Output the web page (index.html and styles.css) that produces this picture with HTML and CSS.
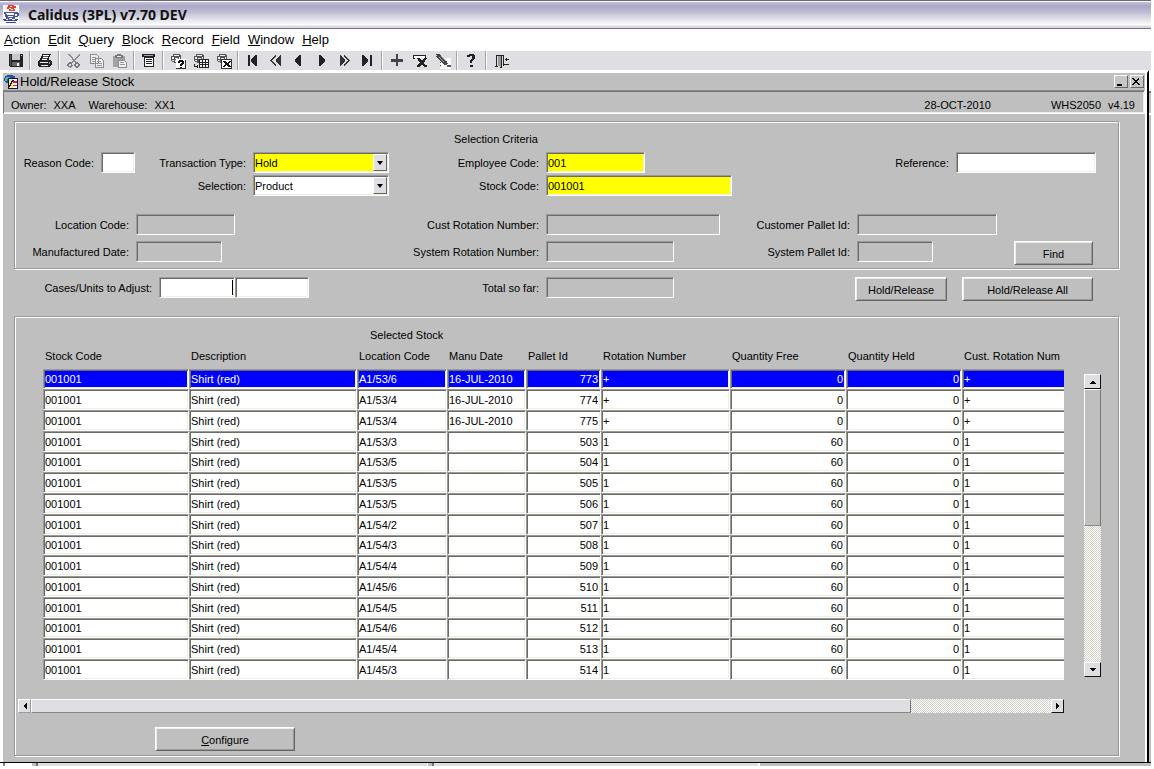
FILE: index.html
```html
<!DOCTYPE html>
<html lang="en">
<head>
<meta charset="utf-8">
<meta name="viewport" content="width=device-width, initial-scale=1">
<title>Calidus (3PL) v7.70 DEV</title>
<link rel="stylesheet" href="styles.css">
</head>
<body>
<div class="app">
  <header class="titlebar">
    <svg class="java" viewBox="0 0 16 18" aria-hidden="true"><rect width="16" height="18" fill="#fff"/><path d="M5 0h6v1h2v2h-2v1H8v1h2v1H6V4H4V2h1zM10 4h2v2h-2z" fill="#f03c30"/><path d="M7 1h2v1H7zM6 3h2v1H6z" fill="#fff"/><path d="M1 7h11v1H3v1h8V7h4v1h1v3h-1v1h-3v2H9v1H5v-1H3v-2H2V9H1z" fill="#4a54b0"/><path d="M4 9h7v1H4zM5 11h5v1H5zM12 9h2v2h-2zM6 13h3v1H6z" fill="#fff"/><path d="M0 14h3v1h9v-1h3v1h-1v1H1v-1H0zM3 17h10v1H3z" fill="#3d3f9a"/></svg>
    <h1 class="app-name">Calidus (3PL) v7.70 DEV</h1>
  </header>
  <nav class="menubar" aria-label="Main menu">
    <a href="#action"><u>A</u>ction</a>
    <a href="#edit"><u>E</u>dit</a>
    <a href="#query"><u>Q</u>uery</a>
    <a href="#block"><u>B</u>lock</a>
    <a href="#record"><u>R</u>ecord</a>
    <a href="#field"><u>F</u>ield</a>
    <a href="#window"><u>W</u>indow</a>
    <a href="#help"><u>H</u>elp</a>
  </nav>
  <div class="toolbar" role="toolbar" aria-label="Tools">
    <button class="tool" aria-label="Save"><svg viewBox="0 0 16 16"><path d="M1 1h14v13H2v-1H1z" fill="#222"/><path d="M4 1h8v6H4z" fill="#c8c8cc"/><path d="M13 2h1v1h-1z" fill="#ddd"/><path d="M4 9h8v4H4z" fill="#666"/><path d="M9 10h2v3H9z" fill="#eee"/><path d="M2 2h1v11H2z" fill="#555"/></svg></button>
    <span class="sep"></span>
    <button class="tool" aria-label="Print"><svg viewBox="0 0 16 16"><path d="M5 1h9v1h-1v2h-1v3h2v1h1v4h-1v1h-1v1H2v-1H1V8h1V7h1V5h1V3h1z" fill="#222"/><path d="M6 2h6v1h-1v2h-1v2H5V5h1z" fill="#fff"/><path d="M6 3h5v1H6zM5 5h5v1H5z" fill="#555"/><path d="M3 9h8v1H3zM4 12h7v1H4z" fill="#eee"/><path d="M12 9h1v2h-1z" fill="#aaa"/></svg></button>
    <span class="sep"></span>
    <button class="tool" aria-label="Cut" disabled><svg viewBox="0 0 16 16"><path d="M3 1l7 9M14 2L5 10" stroke="#8c8c90" stroke-width="1.5"/><circle cx="4" cy="12" r="2" fill="none" stroke="#77777b" stroke-width="1.2"/><circle cx="11" cy="12" r="2" fill="none" stroke="#77777b" stroke-width="1.2"/></svg></button>
    <button class="tool" aria-label="Copy" disabled><svg viewBox="0 0 16 16"><path d="M1.500 1.500h6l2 2v7h-8zM6.500 5.500h6l2 2v7h-8z" fill="#eee" stroke="#8c8c90"/><path d="M3 4h4M3 6h3M3 8h3M8 8.500h4M8 10.500h5M8 12.500h5" stroke="#99999d"/></svg></button>
    <button class="tool" aria-label="Paste" disabled><svg viewBox="0 0 16 16"><path d="M1 3h12v11H1z" fill="#a2a2a6"/><path d="M5 1h4v1h2v3H3V2h2z" fill="#77777b"/><path d="M5 3h4v1H5z" fill="#eee"/><path d="M6.500 7.500h6l2 2v5h-8z" fill="#eee" stroke="#8c8c90"/><path d="M8 9.500h4M8 11.500h5" stroke="#99999d"/></svg></button>
    <span class="sep"></span>
    <button class="tool" aria-label="List"><svg viewBox="0 0 16 16"><path d="M1 1h13v3H1z" fill="#222"/><path d="M3 2h9v1H3z" fill="#aaa"/><path d="M3.500 4.500h9v9h-9z" fill="#fff" stroke="#222"/><path d="M5 6.500h6M5 8.500h6M5 10.500h6" stroke="#222"/></svg></button>
    <span class="sep"></span>
    <button class="tool" aria-label="Enter query"><svg viewBox="0 0 16 16"><path d="M3 1h7v1h1v6H9v2H4V9H2V8H1V3h2z" fill="#555"/><path d="M4 2h5v1H4zM2 4h2v2H2zM5 5h3v1H5zM9 4h1v2H9zM2 7h2v1H2zM5 7h3v2H5z" fill="#eee"/><path d="M6 6h10v10H6z" fill="#fff"/><path d="M6 15h9V7h1v9H6z" fill="#333"/><path d="M8 8h1V7h4v1h1v3h-1v1h-1v1h-2v-2h1v-1h1V9h-2v1H8zM10 14h2v1h-2z" fill="#111"/></svg></button>
    <button class="tool" aria-label="Execute query"><svg viewBox="0 0 16 16"><path d="M3 1h7v1h1v6H9v2H4V9H2V8H1V3h2z" fill="#555"/><path d="M4 2h5v1H4zM2 4h2v2H2zM5 5h3v1H5zM9 4h1v2H9zM2 7h2v1H2z" fill="#eee"/><path d="M6 6h10v9H6z" fill="#222"/><path d="M7 7h2v2H7zM10 7h2v2h-2zM13 7h2v2h-2zM7 10h2v1H7zM10 10h2v1h-2zM13 10h2v1h-2zM7 12h2v2H7zM10 12h2v2h-2zM13 12h2v2h-2z" fill="#eee"/><path d="M1 11h1v2h2v-1h1v3H4v-1H1z" fill="#222"/></svg></button>
    <button class="tool" aria-label="Cancel query"><svg viewBox="0 0 16 16"><path d="M3 1h7v1h1v6H9v2H4V9H2V8H1V3h2z" fill="#555"/><path d="M4 2h5v1H4zM2 4h2v2H2zM5 5h3v1H5zM9 4h1v2H9zM2 7h2v1H2zM5 7h3v2H5z" fill="#eee"/><path d="M5.500 6.500h10v9h-10z" fill="#fff" stroke="#333"/><path d="M7 8h3v1h1v1h1V9h1V8h2v1h-1v1h-1v2h1v1h1v1h-3v-1h-1v-1h-1v1H9v1H7v-1h1v-1h1v-2H8V9H7z" fill="#111"/></svg></button>
    <span class="sep"></span>
    <button class="tool" aria-label="First record"><svg viewBox="0 0 16 16"><path d="M3 2h2v11H3zM12 2v11h-2V12H9v-1H8v-1H7V9H6V6h1V5h1V4h1V3h1V2z" fill="#222"/></svg></button>
    <button class="tool" aria-label="Previous set"><svg viewBox="0 0 16 16"><path d="M13 2v11h-1v-1h-1v-1h-1v-1H9V9H8V6h1V5h1V4h1V3h1V2z" fill="#333"/><path d="M8 2.500L3 7.500l5 5" fill="none" stroke="#333" stroke-width="1.500"/></svg></button>
    <button class="tool" aria-label="Previous record"><svg viewBox="0 0 16 16"><path d="M10 2v11H8v-1H7v-1H6v-1H5V9H4V6h1V5h1V4h1V3h1V2z" fill="#222"/></svg></button>
    <button class="tool" aria-label="Next record"><svg viewBox="0 0 16 16"><path d="M5 2v11h2v-1h1v-1h1v-1h1V9h1V6h-1V5H9V4H8V3H7V2z" fill="#222"/></svg></button>
    <button class="tool" aria-label="Next set"><svg viewBox="0 0 16 16"><path d="M3 2v11h1v-1h1v-1h1v-1h1V9h1V6H7V5H6V4H5V3H4V2z" fill="#333"/><path d="M7 2.500l5 5-5 5" fill="none" stroke="#333" stroke-width="1.500"/></svg></button>
    <button class="tool" aria-label="Last record"><svg viewBox="0 0 16 16"><path d="M10 2h2v11h-2zM2 2v11h2v-1h1v-1h1v-1h1V9h1V6H7V5H6V4H5V3H4V2z" fill="#222"/></svg></button>
    <span class="sep"></span>
    <button class="tool" aria-label="Insert record"><svg viewBox="0 0 16 16"><path d="M7 1h2v5h5v3H9v4H7V9H2V6h5z" fill="#444"/></svg></button>
    <button class="tool" aria-label="Remove record"><svg viewBox="0 0 16 16"><path d="M1 2h13v4h-2V5H3v1H1z" fill="#222"/><path d="M2 3h11v2H2z" fill="#fff"/><path d="M5 5h3v1h1v1h2V6h2V5h2v1h-1v1h-1v2h-1v2h1v1h2v2h-3v-1h-1v-1H9v1H8v1H5v-2h1v-1h1v-1h1V9H7V8H6V6H5z" fill="#222"/></svg></button>
    <button class="tool" aria-label="Clear record"><svg viewBox="0 0 16 16"><path d="M5 5h11v11H5z" fill="#fff"/><path d="M1 3l3-2 8 8-3 3z" fill="#444"/><path d="M4 4l5 5M6 3l5 5" stroke="#aaa"/><path d="M9 11l3-2 1 2-3 1zM12 12h4v2h-4z" fill="#555"/><path d="M1 1h2v1H1zM5 9h1v1H5zM5 12h1v1H5z" fill="#333"/></svg></button>
    <span class="sep"></span>
    <button class="tool" aria-label="Help"><svg viewBox="0 0 16 16"><path d="M3 2h2V1h5v1h1v4h-1v1H9v1H8v2H6V7h1V6h1V3H6v1H3zM6 12h3v2H6z" fill="#222"/></svg></button>
    <span class="sep"></span>
    <button class="tool" aria-label="Exit"><svg viewBox="0 0 16 16"><path d="M3 2h8v11h-1V3H4v10h1v1H2v-1h1z" fill="#222"/><path d="M5 3h4v11H7v-1H5z" fill="#999"/><path d="M8 3h1v12H7v-1h1z" fill="#222"/><path d="M11 11h5v1h-5zM12 6h4v1h-4zM13 5h1v3h-1z" fill="#222"/></svg></button>
  </div>

  <div class="desktop">
    <main class="window">
      <div class="window-title">
        <svg class="window-icon" viewBox="0 0 14 14" aria-hidden="true"><path d="M3 0h6v1h2v2h1v6H4V8H2V7H1V6H0V3h1V1h2z" fill="#1a4fa8"/><path d="M2 2h4v2H3v2H1V3h1z" fill="#3fc0a0"/><path d="M4 3h10v11H4z" fill="#101060"/><path d="M5 4h4v9H5z" fill="#ffe860"/><path d="M9 4h4v9H9z" fill="#fff"/><path d="M9 6h4v2H9zM9 10h4v1H9z" fill="#e02020"/><path d="M5 12l4-7" stroke="#101060" stroke-width="1.500"/></svg>
        <h2 class="window-name">Hold/Release Stock</h2>
        <button class="win-btn" aria-label="Minimize"><svg viewBox="0 0 10 10"><path d="M2 7h5v2H2z"/></svg></button>
        <button class="win-btn" aria-label="Close"><svg viewBox="0 0 10 10"><path d="M2 1l6 7M8 1L2 8" stroke="#000" stroke-width="1.400"/></svg></button>
      </div>
      <div class="status">
        <span>Owner:</span><span>XXA</span><span class="status-wh">Warehouse:</span><span>XX1</span>
        <span class="status-date">28-OCT-2010</span><span>WHS2050</span><span>v4.19</span>
      </div>

      <form class="content">
        <section class="panel criteria">
          <h3 class="criteria-title">Selection Criteria</h3>
          <div class="cell a">
            <label class="lab-reason" for="reason">Reason Code:</label><input class="w-34" id="reason">
            <label class="lab-type" for="type">Transaction Type:</label>
            <span class="combo req"><select id="type"><option>Hold</option><option>Release</option></select><span class="drop" aria-hidden="true"></span></span>
          </div>
          <div class="cell b"><label for="employee">Employee Code:</label><input class="w-99 req" id="employee" value="001"></div>
          <div class="cell c wide"><label for="reference">Reference:</label><input class="w-140" id="reference"></div>

          <div class="cell a">
            <label class="lab-selection" for="selection">Selection:</label>
            <span class="combo"><select id="selection"><option>Product</option></select><span class="drop" aria-hidden="true"></span></span>
          </div>
          <div class="cell b"><label for="stock">Stock Code:</label><input class="w-186 req" id="stock" value="001001"></div>
          <div class="cell c"></div>

          <div class="cell a"><label for="location">Location Code:</label><input class="w-99 off" id="location" readonly></div>
          <div class="cell b"><label for="custrot">Cust Rotation Number:</label><input class="w-174 off" id="custrot" readonly></div>
          <div class="cell c"><label for="custpal">Customer Pallet Id:</label><input class="w-140 off" id="custpal" readonly></div>

          <div class="cell a last"><label for="made">Manufactured Date:</label><input class="w-86 off" id="made" readonly></div>
          <div class="cell b last"><label for="sysrot">System Rotation Number:</label><input class="w-128 off" id="sysrot" readonly></div>
          <div class="cell c last"><label for="syspal">System Pallet Id:</label><input class="w-76 off" id="syspal" readonly><button type="button" class="btn find">Find</button></div>
        </section>

        <div class="adjust">
          <div class="cell a"><label class="lab-adjust" for="cases">Cases/Units to Adjust:</label><input class="w-76 caret" id="cases"><input class="w-74" id="units" aria-label="Units to Adjust"></div>
          <div class="cell b"><label for="total">Total so far:</label><input class="w-128 off" id="total" readonly></div>
          <div class="actions"><button type="button" class="btn hold">Hold/Release</button><button type="button" class="btn hold-all">Hold/Release All</button></div>
        </div>

        <section class="panel stock">
          <div class="grid-area">
            <table class="stock-table">
              <caption>Selected Stock</caption>
              <colgroup><col class="c-code"><col class="c-desc"><col class="c-loc"><col class="c-date"><col class="c-pal"><col class="c-rot"><col class="c-qty"><col class="c-qty"><col class="c-cust"></colgroup>
              <thead><tr><th>Stock Code</th><th>Description</th><th>Location Code</th><th>Manu Date</th><th>Pallet Id</th><th>Rotation Number</th><th>Quantity Free</th><th>Quantity Held</th><th>Cust. Rotation Num</th></tr></thead>
              <tbody>
                <tr class="selected"><td>001001</td><td>Shirt (red)</td><td>A1/53/6</td><td>16-JUL-2010</td><td class="num">773</td><td>+</td><td class="num">0</td><td class="num">0</td><td>+</td></tr>
                <tr><td>001001</td><td>Shirt (red)</td><td>A1/53/4</td><td>16-JUL-2010</td><td class="num">774</td><td>+</td><td class="num">0</td><td class="num">0</td><td>+</td></tr>
                <tr><td>001001</td><td>Shirt (red)</td><td>A1/53/4</td><td>16-JUL-2010</td><td class="num">775</td><td>+</td><td class="num">0</td><td class="num">0</td><td>+</td></tr>
                <tr><td>001001</td><td>Shirt (red)</td><td>A1/53/3</td><td></td><td class="num">503</td><td>1</td><td class="num">60</td><td class="num">0</td><td>1</td></tr>
                <tr><td>001001</td><td>Shirt (red)</td><td>A1/53/5</td><td></td><td class="num">504</td><td>1</td><td class="num">60</td><td class="num">0</td><td>1</td></tr>
                <tr><td>001001</td><td>Shirt (red)</td><td>A1/53/5</td><td></td><td class="num">505</td><td>1</td><td class="num">60</td><td class="num">0</td><td>1</td></tr>
                <tr><td>001001</td><td>Shirt (red)</td><td>A1/53/5</td><td></td><td class="num">506</td><td>1</td><td class="num">60</td><td class="num">0</td><td>1</td></tr>
                <tr><td>001001</td><td>Shirt (red)</td><td>A1/54/2</td><td></td><td class="num">507</td><td>1</td><td class="num">60</td><td class="num">0</td><td>1</td></tr>
                <tr><td>001001</td><td>Shirt (red)</td><td>A1/54/3</td><td></td><td class="num">508</td><td>1</td><td class="num">60</td><td class="num">0</td><td>1</td></tr>
                <tr><td>001001</td><td>Shirt (red)</td><td>A1/54/4</td><td></td><td class="num">509</td><td>1</td><td class="num">60</td><td class="num">0</td><td>1</td></tr>
                <tr><td>001001</td><td>Shirt (red)</td><td>A1/45/6</td><td></td><td class="num">510</td><td>1</td><td class="num">60</td><td class="num">0</td><td>1</td></tr>
                <tr><td>001001</td><td>Shirt (red)</td><td>A1/54/5</td><td></td><td class="num">511</td><td>1</td><td class="num">60</td><td class="num">0</td><td>1</td></tr>
                <tr><td>001001</td><td>Shirt (red)</td><td>A1/54/6</td><td></td><td class="num">512</td><td>1</td><td class="num">60</td><td class="num">0</td><td>1</td></tr>
                <tr><td>001001</td><td>Shirt (red)</td><td>A1/45/4</td><td></td><td class="num">513</td><td>1</td><td class="num">60</td><td class="num">0</td><td>1</td></tr>
                <tr><td>001001</td><td>Shirt (red)</td><td>A1/45/3</td><td></td><td class="num">514</td><td>1</td><td class="num">60</td><td class="num">0</td><td>1</td></tr>
              </tbody>
            </table>
            <div class="vscroll">
              <button type="button" class="arrow" aria-label="Scroll up"><svg viewBox="0 0 8 8"><path d="M4 2l3 4H1z"/></svg></button>
              <div class="vthumb"></div>
              <div class="vtrack"></div>
              <button type="button" class="arrow" aria-label="Scroll down"><svg viewBox="0 0 8 8"><path d="M4 6L1 2h6z"/></svg></button>
            </div>
          </div>
          <div class="hscroll">
            <button type="button" class="arrow" aria-label="Scroll left"><svg viewBox="0 0 8 8"><path d="M2 4l4-3v6z"/></svg></button>
            <div class="hthumb"></div>
            <div class="htrack"></div>
            <button type="button" class="arrow" aria-label="Scroll right"><svg viewBox="0 0 8 8"><path d="M6 4L2 1v6z"/></svg></button>
          </div>
          <button type="button" class="btn configure"><u>C</u>onfigure</button>
        </section>
      </form>
    </main>
    <div class="behind-right" aria-hidden="true"></div>
  </div>
  <div class="behind-bottom" aria-hidden="true"><span class="bb-white"></span><span class="bb-grey"></span><span class="bb-first"></span><span class="bb-grey"></span><span class="bb-second"></span><span class="bb-rest"></span></div>
</div>
</body>
</html>
```
FILE: styles.css
```css
* { box-sizing: border-box; }

body {
  margin: 0;
  background: #fff;
  color: #000;
  font: 11px/14px "Liberation Sans", Arial, sans-serif;
}

h1, h2, h3 { margin: 0; font-weight: normal; }
button, input, select { font: inherit; color: inherit; margin: 0; padding: 0; border-radius: 0; }
svg { display: block; shape-rendering: crispEdges; }

.app { margin: 0 3px 3px 0; }

/* Title, menu and tool bars */
.titlebar {
  display: flex;
  align-items: center;
  gap: 9px;
  height: 29px;
  padding: 0 3px 2px;
  border-top: 1px solid #6a6488;
  border-bottom: 1px solid #77729a;
  background: linear-gradient(#fff 0 1px, #c4c2dc 1px, #a9a7c6 5px, #c2c1d4 12px, #e0e0e8 18px, #f8f8fa 23px, #fff 24px, #dcdce0 25px, #d6d6da);
}
.java { width: 16px; height: 18px; }
.app-name { padding-top: 2px; font: bold 14px/20px "Noto Sans", "Open Sans", sans-serif; color: #111; }

.menubar { display: flex; gap: 8px; padding: 3px 4px; font-size: 13px; line-height: 16px; }
.menubar a { color: #000; text-decoration: none; }

.toolbar { display: flex; height: 19px; padding-left: 4px; background: #dfdee3; }
.tool { display: flex; align-items: center; justify-content: center; width: 23px; border: 0; background: none; }
.tool svg { width: 16px; height: 16px; }
.sep { width: 6px; background: linear-gradient(to right, transparent 2px, #a4a4a8 2px 3px, #fff 3px 4px, transparent 4px); }

/* Application window */
.desktop { display: flex; padding-left: 3px; border-bottom: 1px solid #000; }
.window {
  flex: 1;
  min-width: 0;
  padding-right: 2px;
  border-top: 3px solid #fff;
  border-right: 2px solid #000;
  background: linear-gradient(#fff, #fff) right / 2px 100% no-repeat #bfbfbf;
}
.window-title { display: flex; align-items: center; height: 17px; padding: 0 1px; }
.window-icon { width: 14px; height: 14px; }
.window-name { flex: 1; padding-left: 2px; font-size: 13px; line-height: 16px; }
.win-btn {
  width: 14px;
  height: 13px;
  margin-left: 2px;
  border: 1px solid;
  border-color: #fff #66665e #66665e #fff;
  background: #c6c6c6;
}
.win-btn svg { width: 10px; height: 10px; }

.status {
  display: flex;
  gap: 7px;
  height: 24px;
  padding: 7px 9px 0 7px;
  border: 1px solid;
  border-color: #8a8a8a #fff #fff #77776f;
  box-shadow: inset 0 1px #74746e, inset -1px -1px #eeeee2;
}
.status-wh { margin-left: 6px; }
.status-date { margin: 0 53px 0 auto; }

.content { padding: 7px 26px 6px 11px; }
.panel { border: 1px solid #999; box-shadow: inset 1px 1px #fff, 1px 1px #fff; }

/* Selection form */
.criteria, .adjust { display: grid; grid-template-columns: 373fr 352fr 376fr; align-items: start; }
.criteria { grid-template-rows: 14px 27px 23px 39px 30px; padding: 10px 1px 3px; }
.criteria-title { grid-column: 2 / 4; padding-left: 65px; font-size: 11px; }

.cell { display: flex; align-items: center; align-self: end; }
.cell label { flex: none; margin-right: 7px; text-align: right; white-space: nowrap; }
.cell.last { align-items: flex-start; height: 24px; }
.cell.last label { padding-top: 4px; }
.a label { width: 113px; }
.b label { width: 150px; }
.c label { width: 109px; }
.c.wide label { width: 208px; }
.a .lab-reason { width: 78px; }
.a .lab-type { width: 111px; }
.a .lab-selection { width: 230px; }
.a .lab-adjust { width: 136px; }

input, .combo {
  height: 21px;
  padding: 0 0 0 1px;
  border: 1px solid;
  border-color: #999 #fff #fff #999;
  box-shadow: inset 1px 1px #6c6c66, inset -1px -1px #efefe2;
  background: #fff;
  outline: 0;
}
.req { background: #ff0; }
.off { height: 21px; background: #bfbfbf; box-shadow: inset 1px 1px #6c6c66; }
.caret { background: linear-gradient(#000, #000) right 1px center / 1px 15px no-repeat #fff; }
.w-34 { width: 34px; }
.w-74 { width: 74px; }
.w-76 { width: 76px; }
.w-86 { width: 86px; }
.w-99 { width: 99px; }
.w-128 { width: 128px; }
.w-140 { width: 140px; }
.w-174 { width: 174px; }
.w-186 { width: 186px; }

.combo { display: flex; width: 136px; padding: 1px; }
.combo select { flex: 1; min-width: 0; border: 0; background: transparent; appearance: none; outline: 0; }
.drop {
  display: grid;
  place-items: center;
  width: 14px;
  border: 1px solid;
  border-color: #fff #66665e #66665e #fff;
  background: #dfdee3;
}
.drop::after { content: ""; border: 3px solid transparent; border-top: 4px solid #000; border-bottom: 0; }

.btn {
  height: 24px;
  padding: 1px 0 0;
  border: 1px solid;
  border-color: #fff #66665e #66665e #fff;
  box-shadow: inset 1px 1px #efefe2, inset -1px -1px #999;
  background: #bfbfbf;
}
.find { width: 79px; margin: 0 24px 0 auto; }

.adjust { padding: 8px 2px 15px; }
.adjust .cell { align-self: start; }
.actions { display: flex; justify-content: flex-end; gap: 15px; padding-right: 24px; }
.hold { width: 92px; }
.hold-all { width: 131px; }

/* Stock table */
.stock { padding: 1px 1px 4px; }
.grid-area { display: flex; gap: 20px; padding: 10px 16px 0 27px; }
.stock-table { flex: 1; width: 100%; min-width: 0; table-layout: fixed; border-spacing: 0; }
.stock-table caption { padding: 0 0 7px 327px; text-align: left; }
.stock-table th { height: 20px; padding: 0 0 0 2px; font-weight: normal; text-align: left; vertical-align: top; white-space: nowrap; }
.stock-table td {
  height: 21px;
  padding: 0 1px;
  border: 1px solid;
  border-color: #999 #fff #fff #999;
  box-shadow: inset 1px 1px #6c6c66, inset -1px -1px #efefe2;
  background: #fff;
  line-height: 16px;
  white-space: nowrap;
}
.stock-table tr:nth-child(4n+1) td { height: 20px; }
.stock-table td:last-child { border-right: 0; box-shadow: inset 1px 1px #6c6c66, inset 0 -1px #efefe2; }
.stock-table .num { padding-right: 2px; text-align: right; }
.stock-table .selected td { background: #00f; color: #fff; }
.c-code { width: 146px; }
.c-desc { width: 168px; }
.c-loc { width: 90px; }
.c-date { width: 79px; }
.c-pal { width: 75px; }
.c-rot { width: 129px; }
.c-qty { width: 116px; }
.c-cust { width: 102px; }

.vscroll { display: flex; flex-direction: column; width: 17px; margin: 46px 0 3px; }
.hscroll { display: flex; height: 14px; margin: 19px 53px 14px 2px; }
.arrow {
  display: grid;
  place-items: center;
  flex: none;
  width: 17px;
  height: 15px;
  border: 1px solid;
  border-color: #fff #111 #111 #fff;
  background: #dfdee3;
}
.arrow svg { width: 8px; height: 8px; }
.hscroll .arrow { width: 13px; height: 14px; }
.hscroll .arrow:first-child { border-color: #fff #99999d #99999d #fff; }
.vthumb, .hthumb { border: 1px solid; border-color: #fff #77776f #88887f #fff; }
.vthumb { flex: 136; background: #bfbfbf; }
.hthumb { flex: 880; background: #dfdee3; }
.vtrack, .htrack { background: repeating-conic-gradient(#fff 0 25%, #d2cfc6 0 50%) 0 0 / 2px 2px; }
.vtrack { flex: 138; }
.htrack { flex: 140; }
.configure { display: block; width: 140px; margin-left: 139px; }

/* Edges of the windows underneath */
.behind-right {
  width: 2px;
  background: linear-gradient(#fff 0 21px, #777 21px 23px, #bfbfbf 23px 43px, #fff 43px 45px, #bfbfbf 45px);
}
.behind-bottom { display: flex; height: 3px; padding-left: 3px; }
.bb-white { width: 29px; border-left: 2px solid #88887f; }
.bb-grey { width: 6px; background: #bfbfbf; border-right: 2px solid #77776f; }
.bb-first { flex: 389; background: #e0dfe3; border-right: 1px solid #fff; }
.bb-second { flex: 325; background: #e0dfe3; border-right: 2px solid #fff; }
.bb-rest { flex: 391; background: #bfbfbf; }
```
